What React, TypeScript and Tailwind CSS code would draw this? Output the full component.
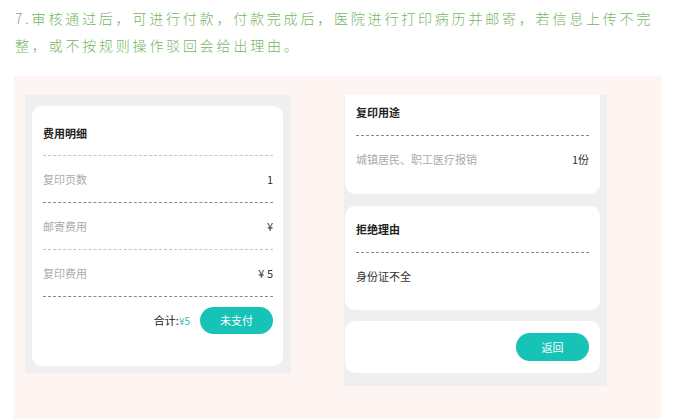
import React from "react";

const feeRows = [
  { label: "复印页数", value: "1", line: "border-[#8a8a8a]" },
  { label: "邮寄费用", value: "¥", line: "border-[#c4c4c4]" },
  { label: "复印费用", value: "¥ 5", line: "border-[#8a8a8a]" },
];

function App() {
  return (
    <div
      className="w-[675px] h-[419px] overflow-hidden bg-white px-[14px]"
      style={{ fontFamily: '"Noto Sans CJK SC", "Noto Sans", sans-serif' }}
    >
      {/* Intro text */}
      <p className="pt-[5px] pl-[1px] text-[14px] leading-[27px] tracking-[2.8px] text-[#74b565] font-light whitespace-nowrap">
        7.审核通过后，可进行付款，付款完成后，医院进行打印病历并邮寄，若信息上传不完
        <br />
        整，或不按规则操作驳回会给出理由。
      </p>

      <div className="mt-[17px] h-[400px] w-[647px] bg-[#fef5f3] pt-[19px] flex items-start">
        {/* Left panel */}
        <div className="ml-[11px] w-[266px] bg-[#efefef] pt-[11px] pb-[7px] pl-[7px] pr-[8px]">
          <div className="h-[260px] rounded-[10px] bg-white pl-[11px] pr-[10px]">
            <div className="h-[50px] border-b border-dashed border-[#c4c4c4] pt-[19px]">
              <h3 className="text-[11px] leading-[16px] font-bold text-[#222]">费用明细</h3>
            </div>
            {feeRows.map((row, idx) => (
              <div
                key={idx}
                className={`h-[47px] border-b border-dashed ${row.line} flex items-center justify-between text-[11px]`}
              >
                <span className="text-[#ababab]">{row.label}</span>
                <span className="text-[#333]">{row.value}</span>
              </div>
            ))}
            <div className="pt-[10px] flex items-center justify-end">
              <span className="text-[11px] text-[#222]">合计:</span>
              <span className="text-[10px] text-[#3fb9c0] mr-[10px]">¥5</span>
              <button className="h-[27px] w-[73px] rounded-full bg-[#17c3b6] text-[11px] text-white">
                未支付
              </button>
            </div>
          </div>
        </div>

        {/* Right panel */}
        <div className="ml-[53px] w-[263px] bg-[#efefef] pl-[1px] pr-[7px] pb-[13px]">
          <div className="h-[99px] rounded-b-[10px] bg-white px-[11px] mb-[12px]">
            <div className="h-[41px] border-b border-dashed border-[#8a8a8a] pt-[9px]">
              <h3 className="text-[11px] leading-[16px] font-bold text-[#222]">复印用途</h3>
            </div>
            <div className="h-[46px] flex items-center justify-between text-[11px]">
              <span className="text-[#ababab]">城镇居民、职工医疗报销</span>
              <span className="text-[#333]">1份</span>
            </div>
          </div>

          <div className="h-[104px] rounded-[10px] bg-white px-[11px] mb-[11px]">
            <div className="h-[47px] border-b border-dashed border-[#8a8a8a] pt-[15px]">
              <h3 className="text-[11px] leading-[16px] font-bold text-[#222]">拒绝理由</h3>
            </div>
            <div className="h-[46px] flex items-center text-[11px] text-[#333]">身份证不全</div>
          </div>

          <div className="h-[52px] rounded-[10px] bg-white pr-[11px] flex items-center justify-end">
            <button className="h-[28px] w-[73px] rounded-full bg-[#17c3b6] text-[11px] text-white">
              返回
            </button>
          </div>
        </div>
      </div>
    </div>
  );
}

export default App;
